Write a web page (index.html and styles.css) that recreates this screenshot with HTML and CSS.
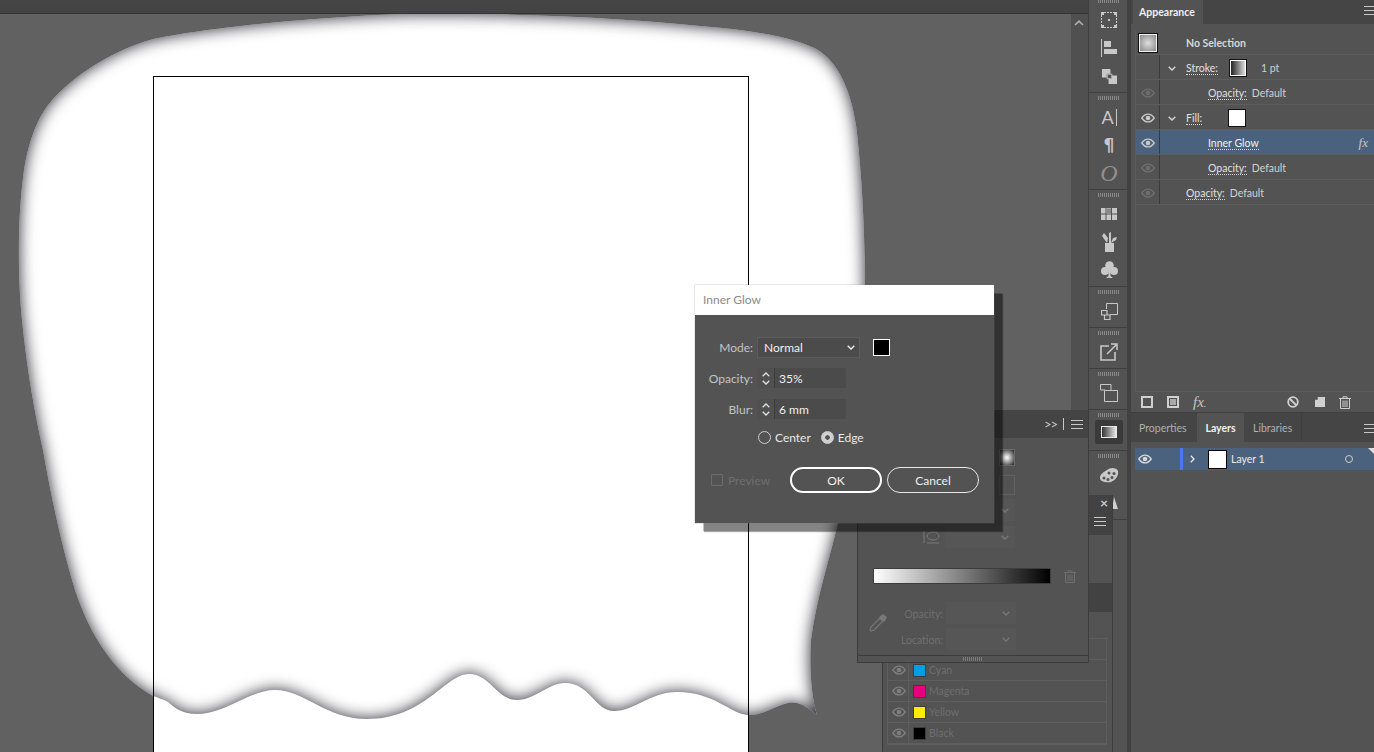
FILE: index.html
```html
<!DOCTYPE html>
<html lang="en">
<head>
<meta charset="utf-8">
<title>Inner Glow</title>
<link rel="stylesheet" href="styles.css">
</head>
<body>
<svg class="defs" width="0" height="0">
  <symbol id="eye" viewBox="0 0 14 10"><path d="M.8 5C2.600 2.400 4.700 1.100 7 1.100S11.400 2.400 13.200 5C11.400 7.600 9.300 8.900 7 8.900S2.600 7.600 .8 5Z" fill="none" stroke="currentColor" stroke-width="1.400"/><circle cx="7" cy="5" r="2.300" fill="currentColor"/></symbol>
  <symbol id="menu" viewBox="0 0 12 9"><path d="M0 .5H12M0 4.500H12M0 8.500H12" stroke="currentColor" fill="none"/></symbol>
  <symbol id="chev" viewBox="0 0 8 5"><path d="M.7.8 4 4 7.300.8" stroke="currentColor" stroke-width="1.300" fill="none"/></symbol>
  <symbol id="trash" viewBox="0 0 12 13"><path d="M0 2.500H12M4 2.500V.8H8V2.500M1.500 2.500V12.500H10.500V2.500M4 4.500V11M6 4.500V11M8 4.500V11" stroke="currentColor" fill="none"/></symbol>
</svg>

<div class="app">
  <main class="workspace">
    <div class="topbar"></div>
    <div class="stage">
      <div class="canvas">
        <svg class="artwork" viewBox="0 14 1071 738" width="1071" height="738">
          <defs>
            <filter id="innerglow" x="-5%" y="-8%" width="110%" height="116%" color-interpolation-filters="sRGB">
              <feComponentTransfer in="SourceAlpha" result="inv"><feFuncA type="table" tableValues="1 0"/></feComponentTransfer>
              <feGaussianBlur in="inv" stdDeviation="8" result="blur"/>
              <feFlood flood-color="#2a2832" result="col"/>
              <feComposite in="col" in2="blur" operator="in" result="shade"/>
              <feComposite in="shade" in2="SourceAlpha" operator="in" result="inner"/>
              <feMerge><feMergeNode in="SourceGraphic"/><feMergeNode in="inner"/></feMerge>
            </filter>
          </defs>
          <rect x="153" y="76" width="596" height="700" fill="#fff"/>
          <path filter="url(#innerglow)" fill="#fff" d="M400 14C500 13 600 16 700 26C740 29 785 35 812 47C835 57 850 85 856 125C861 165 865 225 865 290C865 380 852 470 838 523C830 557 816 600 811 640C809 670 812 700 817 715C805 705 797 701 788 703C775 706 762 716 748 715C730 714 715 692 677 692C650 692 635 711 614 711C595 711 590 683 565 683C548 683 535 700 517 700C497 700 490 674 469 674C445 674 425 719 367 719C325 719 305 690 275 690C250 690 225 714 197 714C182 714 175 708 168 702C163 699 158 698 153 696C125 680 95 650 75 590C60 540 50 490 43 450C35 415 27 370 22 320C18 280 17 220 24 170C30 135 40 110 60 92C80 72 115 50 150 40C190 30 300 18 400 14Z"/>
          <rect x="153.500" y="76.500" width="595" height="700" fill="none" stroke="#000"/>
        </svg>
      </div>
      <div class="scrollbar"><svg class="scroll-up" width="10" height="6"><use href="#chev" transform="rotate(180 5 3)" width="10" height="6"/></svg></div>
    </div>
  </main>

  <aside class="dock">
    <section class="dock-group triple first">
      <i class="grip"></i>
      <div class="dock-icon"><svg width="16" height="16" viewBox="0 0 16 16"><path d="M3 .5H13M3 15.500H13M.5 3V13M15.500 3V13" stroke="#c8c8c8" stroke-dasharray="2 1" fill="none"/><path d="M0 0H3V3H0ZM13 0H16V3H13ZM0 13H3V16H0ZM13 13H16V16H13ZM7 7H9V9H7Z" fill="#c8c8c8"/></svg></div>
      <div class="dock-icon"><svg width="16" height="18" viewBox="0 0 16 18"><path d="M.5 0V18" stroke="#c8c8c8"/><path d="M3 2H10V8H3ZM3 10H16V15H3Z" fill="#c8c8c8"/></svg></div>
      <div class="dock-icon"><svg width="15" height="15" viewBox="0 0 16 16"><path d="M0 0H9V5H5V9H0ZM7 7H16V16H7Z" fill="#c8c8c8"/><path d="M5.500 5.500H10.500V10.500H5.500Z" fill="#535353" stroke="#c8c8c8"/></svg></div>
    </section>
    <section class="dock-group triple">
      <i class="grip"></i>
      <div class="dock-icon glyph-a"><span>A</span><b></b></div>
      <div class="dock-icon glyph-p">¶</div>
      <div class="dock-icon glyph-o">O</div>
    </section>
    <section class="dock-group triple">
      <i class="grip"></i>
      <div class="dock-icon"><svg width="16" height="12" viewBox="0 0 16 12"><path d="M0 0H16V12H0Z" fill="#c8c8c8"/><path d="M5 0V12M10.500 0V12M0 6H16" stroke="#535353"/><path d="M5.500 .5H10V5.500H5.500Z" fill="#888"/></svg></div>
      <div class="dock-icon"><svg width="16" height="20" viewBox="0 0 16 20"><path d="M4 11H13V20H4Z" fill="#c8c8c8"/><path d="M6 11 1 4 3 1 7 6ZM8 11V1L10 0 10 11ZM10 11 12 6 16 5 15 8Z" fill="#c8c8c8"/></svg></div>
      <div class="dock-icon"><svg width="17" height="18" viewBox="0 0 17 18"><circle cx="8.500" cy="4.500" r="4.300" fill="#c8c8c8"/><circle cx="4" cy="10" r="4" fill="#c8c8c8"/><circle cx="13" cy="10" r="4" fill="#c8c8c8"/><path d="M7.500 8H9.500V15L12 17H5L7.500 15Z" fill="#c8c8c8"/></svg></div>
    </section>
    <section class="dock-group">
      <i class="grip"></i>
      <div class="dock-icon"><svg width="17" height="17" viewBox="0 0 17 17"><path d="M5.500 6V.5H16.500V11.500H9" fill="none" stroke="#c8c8c8"/><path d="M.5 7.500H6V12H.5ZM3.500 12H9V16.500H3.500Z" fill="none" stroke="#c8c8c8" stroke-width="1.200"/></svg></div>
    </section>
    <section class="dock-group">
      <i class="grip"></i>
      <div class="dock-icon"><svg width="18" height="18" viewBox="0 0 18 18"><path d="M9 3H1V17H15V9" fill="none" stroke="#c8c8c8" stroke-width="1.600"/><path d="M7 11 16 2M11 1H17V7" fill="none" stroke="#c8c8c8" stroke-width="1.500"/></svg></div>
    </section>
    <section class="dock-group">
      <i class="grip"></i>
      <div class="dock-icon"><svg width="18" height="18" viewBox="0 0 18 18"><path d="M5 6H.5V.5H11V6" fill="none" stroke="#c8c8c8"/><path d="M4.500 6.500H17.500V17.500H4.500Z" fill="none" stroke="#c8c8c8"/></svg></div>
    </section>
    <section class="dock-group">
      <i class="grip"></i>
      <div class="dock-icon active"><span class="grad-chip"></span></div>
    </section>
    <section class="dock-group last">
      <i class="grip"></i>
      <div class="dock-icon"><svg width="20" height="16" viewBox="0 0 20 16"><path d="M1 11C1 7 5 5 8 3C11 .5 17 0 19 4C20 8 17 13 12 15C8 16 1 15 1 11Z" fill="#c8c8c8"/><circle cx="5" cy="11" r="1.500" fill="#535353"/><circle cx="9" cy="12.500" r="1.500" fill="#535353"/><circle cx="13" cy="10.500" r="1.500" fill="#535353"/><circle cx="15" cy="6.500" r="1.500" fill="#535353"/><circle cx="10" cy="6" r="1.500" fill="#535353"/></svg></div>
      <div class="dock-icon offset"><svg width="10" height="12" viewBox="0 0 10 12"><path d="M5 0 9 12H3Z" fill="#d0d0d0"/></svg></div>
    </section>
  </aside>

  <div class="panels">
    <section class="appearance">
      <header class="tabbar">
        <span class="tab on">Appearance</span>
        <svg class="tab-menu" width="12" height="9"><use href="#menu"/></svg>
      </header>
      <div class="rows">
        <div class="row head"><span class="thumb-lg"></span><strong class="t-no">No Selection</strong></div>
        <div class="row line"><span class="eye-cell"></span><svg class="twist" width="8" height="5"><use href="#chev"/></svg><span class="lbl u">Stroke:</span><span class="chip gradient stroke-chip"></span><span class="val pt">1 pt</span></div>
        <div class="row line"><span class="eye-cell"><svg class="eye dim" width="14" height="10"><use href="#eye"/></svg></span><span class="lbl u in2">Opacity:</span><span class="val">Default</span></div>
        <div class="row line"><span class="eye-cell"><svg class="eye" width="14" height="10"><use href="#eye"/></svg></span><svg class="twist" width="8" height="5"><use href="#chev"/></svg><span class="lbl u fill-l">Fill:</span><span class="chip white"></span></div>
        <div class="row line sel"><span class="eye-cell"><svg class="eye" width="14" height="10"><use href="#eye"/></svg></span><span class="lbl u in2 ig">Inner Glow</span><em class="fx">fx</em></div>
        <div class="row line"><span class="eye-cell"><svg class="eye dim" width="14" height="10"><use href="#eye"/></svg></span><span class="lbl u in2">Opacity:</span><span class="val">Default</span></div>
        <div class="row line"><span class="eye-cell"><svg class="eye dim" width="14" height="10"><use href="#eye"/></svg></span><span class="lbl u in1">Opacity:</span><span class="val">Default</span></div>
      </div>
      <footer class="app-tools">
        <svg width="12" height="12" viewBox="0 0 12 12"><path d="M1 1H11V11H1Z" fill="none" stroke="#d0d0d0" stroke-width="2"/></svg>
        <svg width="12" height="12" viewBox="0 0 12 12"><path d="M1 1H11V11H1Z" fill="none" stroke="#d0d0d0" stroke-width="2"/><path d="M3 3H9V9H3Z" fill="#a8a8a8"/></svg>
        <em class="tool-fx">fx<small>.</small></em>
        <svg class="tool-no" width="12" height="12" viewBox="0 0 12 12"><circle cx="6" cy="6" r="4.800" fill="none" stroke="#d0d0d0" stroke-width="1.800"/><path d="M2.500 2.500 9.500 9.500" stroke="#d0d0d0" stroke-width="1.800"/></svg>
        <svg class="tool-new" width="10" height="10" viewBox="0 0 11 11"><path d="M3 0H11V11H0V3H3Z" fill="#d0d0d0"/></svg>
        <svg class="tool-trash" width="12" height="13"><use href="#trash" color="#d0d0d0"/></svg>
      </footer>
    </section>
    <section class="layers">
      <header class="tabbar tabbar-l">
        <span class="tab">Properties</span>
        <span class="tab on">Layers</span>
        <span class="tab lib">Libraries</span>
        <svg class="tab-menu" width="12" height="9"><use href="#menu"/></svg>
      </header>
      <div class="layer-row">
        <svg class="eye l-eye" width="14" height="10"><use href="#eye"/></svg>
        <i class="l-color"></i>
        <svg class="l-twist" width="5" height="8" viewBox="0 0 5 8"><path d="M.8.8 4 4 .8 7.200" fill="none" stroke="#e8e8e8" stroke-width="1.300"/></svg>
        <span class="chip white l-chip"></span>
        <span class="l-name">Layer 1</span>
        <i class="l-target"></i>
        <i class="l-corner"></i>
      </div>
    </section>
  </div>
</div>

<section class="float swatches-panel">
  <header class="sw-head"><span class="sw-x">×</span><svg class="sw-menu" width="14" height="9"><use href="#menu"/></svg></header>
  <div class="sw-space"></div>
  <div class="sw-bar"></div>
  <div class="sw-table">
    <div class="sw-row"></div>
    <div class="sw-row"><svg width="14" height="10"><use href="#eye"/></svg><i class="sw-c cyan"></i><span>Cyan</span></div>
    <div class="sw-row"><svg width="14" height="10"><use href="#eye"/></svg><i class="sw-c magenta"></i><span>Magenta</span></div>
    <div class="sw-row"><svg width="14" height="10"><use href="#eye"/></svg><i class="sw-c yellow"></i><span>Yellow</span></div>
    <div class="sw-row"><svg width="14" height="10"><use href="#eye"/></svg><i class="sw-c black"></i><span>Black</span></div>
  </div>
</section>

<section class="float gradient-panel">
  <header class="gp-head">
    <span class="gp-more">&gt;&gt;</span><i class="gp-sep"></i><svg width="12" height="9"><use href="#menu"/></svg>
  </header>
  <div class="gp-body">
    <div class="gp-row r1"><span class="gp-thumb"></span></div>
    <div class="gp-row r2"><span class="gp-box"></span></div>
    <div class="gp-row r3"><span class="gp-drop"><svg width="8" height="5"><use href="#chev"/></svg></span></div>
    <div class="gp-row r4"><svg class="gp-ico" width="18" height="14" viewBox="0 0 18 14"><ellipse cx="10" cy="6" rx="6" ry="4" fill="none" stroke="#7a7a7a"/><path d="M1 1V13M4 13H16" stroke="#7a7a7a" fill="none"/></svg><span class="gp-drop"><svg width="8" height="5"><use href="#chev"/></svg></span></div>
    <div class="gp-strip"><span class="gp-ramp"></span><svg class="gp-trash" width="12" height="13"><use href="#trash"/></svg></div>
    <div class="gp-foot">
      <svg class="gp-pick" width="18" height="18" viewBox="0 0 18 18"><path d="M11 4 14 7 5 16 2 17 1 16 2 13Z" fill="none" stroke="#777" stroke-width="1.200"/><path d="M11 2 14 0 18 3 16 7 14 8 10 4Z" fill="#777"/></svg>
      <div class="gp-fields">
        <div class="gp-field"><label>Opacity:</label><span class="gp-drop"><svg width="8" height="5"><use href="#chev"/></svg></span></div>
        <div class="gp-field"><label>Location:</label><span class="gp-drop"><svg width="8" height="5"><use href="#chev"/></svg></span></div>
      </div>
    </div>
  </div>
  <footer class="gp-grip"><i class="grip"></i></footer>
</section>

<section class="float dialog">
  <header class="dlg-title">Inner Glow</header>
  <div class="dlg-body">
    <div class="dlg-row">
      <label>Mode:</label>
      <span class="select">Normal<svg width="8" height="5"><use href="#chev"/></svg></span>
      <span class="black-chip"></span>
    </div>
    <div class="dlg-row second">
      <label>Opacity:</label>
      <span class="spin"><span class="arrows"><svg width="8" height="5"><use href="#chev" transform="rotate(180 4 2.500)"/></svg><svg width="8" height="5"><use href="#chev"/></svg></span><span class="num">35%</span></span>
    </div>
    <div class="dlg-row third">
      <label>Blur:</label>
      <span class="spin"><span class="arrows"><svg width="8" height="5"><use href="#chev" transform="rotate(180 4 2.500)"/></svg><svg width="8" height="5"><use href="#chev"/></svg></span><span class="num">6 mm</span></span>
    </div>
    <div class="radios">
      <span class="radio"><i></i>Center</span>
      <span class="radio picked"><i></i>Edge</span>
    </div>
    <div class="dlg-foot">
      <span class="preview"><i></i>Preview</span>
      <span class="btn primary">OK</span>
      <span class="btn">Cancel</span>
    </div>
  </div>
</section>
</body>
</html>
```
FILE: styles.css
```css
* { box-sizing: border-box; }
html, body { margin: 0; padding: 0; width: 1374px; height: 752px; overflow: hidden; }
body { background: #535353; color: #d8d8d8; font: 10.5px Lato, "Open Sans", sans-serif; position: relative; }
.defs { position: absolute; }
i, em { display: block; }
svg { display: block; flex: none; }

.app { display: flex; width: 1374px; height: 752px; }

/* workspace */
.workspace { width: 1089px; flex: none; display: flex; flex-direction: column; border-right: 1px solid #3f3f3f; }
.topbar { height: 14px; flex: none; background: linear-gradient(#454545, #434343 92%, #333 92%); }
.stage { flex: 1; display: flex; min-height: 0; }
.canvas { width: 1071px; flex: none; background: #616161; overflow: hidden; }
.artwork { display: block; }
.scrollbar { flex: 1; background: #505050; padding: 6px 3px 0; }
.scroll-up { color: #b0b0b0; }

/* dock */
.dock { width: 38px; flex: none; color: #c8c8c8; }
.dock-group { padding: 2px 0 3px; border-bottom: 1px solid #3f3f3f; height: 41px; }
.dock-group.triple { height: 97px; }
.dock-group.first { margin-top: -4px; }
.dock-group.last { height: 69px; }
.grip { display: block; width: 21px; height: 4px; margin: 1px auto 3px;
  background: repeating-linear-gradient(90deg, #8a8a8a 0 1px, #535353 1px 2px); }
.dock-icon { height: 28px; display: flex; align-items: center; justify-content: center; padding-left: 2px; }
.dock-icon.active { height: 24px; margin: 2px 4px 2px 6px; padding-left: 0; background: #3a3a3a; border-radius: 2px; }
.dock-icon.offset { justify-content: flex-end; padding-right: 8px; }
.grad-chip { width: 16px; height: 12px; border: 1px solid #e8e8e8; background: linear-gradient(90deg, #333, #e8e8e8); }
.glyph-a { gap: 2px; font-size: 18px; color: #c8c8c8; }
.glyph-a b { width: 1px; height: 17px; background: #c8c8c8; }
.glyph-p { font: bold 17px "DejaVu Sans", sans-serif; }
.glyph-o { font: italic 24px "Liberation Serif", serif; color: #8f8f8f; }

/* right panels */
.panels { flex: 1; min-width: 0; display: flex; flex-direction: column; border-left: 4px solid #414141; }
.tabbar { height: 24px; flex: none; background: #454545; display: flex; padding-left: 2px; position: relative; }
.tab { display: flex; align-items: center; padding: 0 6px; height: 100%; color: #bdbdbd; font-weight: 400; }
.tab.on { background: #535353; color: #f0f0f0; font-weight: 700; width: 70px; }
.tab-menu { position: absolute; right: -2px; top: 6px; color: #c8c8c8; }
.appearance { height: 413px; flex: none; display: flex; flex-direction: column; border-bottom: 1px solid #3f3f3f; }
.rows { margin: 7px 0 0 4px; flex: 1; border-left: 1px solid #5c5c5c; }
.row { height: 25px; display: flex; align-items: center; border-bottom: 1px solid #5d5d5d; position: relative; }
.row.line { padding-top: 2px; }
.row.head { height: 24px; }
.row.sel { background: #4a627e; }
.thumb-lg { width: 18px; height: 18px; margin-left: 3px; border: 1px solid #f0f0f0; outline: 1px solid #111; background: radial-gradient(#ddd, #888); }
.t-no { margin-left: 29px; font-weight: 700; color: #d8d8d8; }
.eye-cell { width: 24px; height: calc(100% + 2px); margin-top: -2px; padding-top: 1px; flex: none; display: flex; align-items: center; justify-content: center; border-right: 1px solid #3a3a3a; }
.eye { color: #c8c8c8; }
.eye.dim { color: #6e6e6e; }
.twist { margin-left: 8px; color: #d8d8d8; }
.lbl.u { border-bottom: 1px dotted #d8d8d8; line-height: 11px; margin-top: 1px; }
.lbl { color: #e0e0e0; margin-left: 10px; }
.lbl.in2 { margin-left: 48px; }
.lbl.in1 { margin-left: 26px; }
.val { margin-left: 5px; color: #d0d0d0; }
.pt { margin-left: 15px; }
.chip { width: 16px; height: 16px; flex: none; border: 1px solid #fff; outline: 1px solid #111; margin-top: -1px; }
.chip.gradient { background: linear-gradient(90deg, #222, #ddd); }
.chip.white { background: #fff; }
.stroke-chip { margin-left: 12px; }
.fill-l + .chip { margin-left: 27px; }
.ig { color: #f0f0f0; }
.fx { position: absolute; right: 6px; font: italic 13px "Liberation Serif", serif; color: #c8c8c8; }
.app-tools { height: 21px; flex: none; margin-left: 4px; border-top: 1px solid #5d5d5d; display: flex; align-items: center; padding-left: 6px; gap: 14px; color: #d0d0d0; }
.tool-fx { font: italic 15px "Liberation Serif", serif; color: #c8c8c8; }
.tool-fx small { font-size: 10px; }
.tool-no { margin-left: 67px; }
.tool-new { margin-left: 2px; }
.tool-trash { margin-left: 0; }

.layers { flex: 1; display: flex; flex-direction: column; }
.tabbar-l { height: 29px; padding-left: 0; }
.tabbar-l .tab { padding: 0 8px; color: #b0b0b0; }
.tabbar-l .tab:first-child { width: 66px; }
.tabbar-l .tab.on { width: 47px; padding: 0; justify-content: center; color: #f0f0f0; }
.tabbar-l .lib { border-right: 1px solid #3f3f3f; width: 58px; padding-left: 9px; }
.tabbar-l .tab-menu { top: 11px; }
.layer-row { margin: 6px 0 0 4px; height: 22px; background: #4a627e; display: flex; align-items: center; position: relative; }
.l-eye { margin-left: 3px; color: #d8d8d8; }
.l-color { width: 3px; height: 100%; margin-left: 28px; background: #4f74f0; }
.l-twist { margin-left: 7px; }
.l-chip { margin: 0 0 0 14px; width: 17px; height: 17px; border: 0; outline: 1px solid #000; }
.l-name { margin-left: 5px; color: #eaeaea; width: 114px; }
.l-target { width: 8px; height: 8px; border: 1px solid #ccc; border-radius: 50%; }
.l-corner { position: absolute; right: 0; top: 0; border: 3px solid; border-color: #ddd #ddd transparent transparent; }

/* floating windows */
.float { position: absolute; }

.swatches-panel { left: 882px; top: 495px; width: 231px; height: 270px; background: #535353; border-left: 1px solid #3c3c3c; border-right: 1px solid #3c3c3c; color: #6f6f6f; }
.sw-head { height: 40px; margin-left: 205px; background: #424242; color: #c8c8c8; display: flex; flex-direction: column; align-items: center; padding-top: 1px; position: relative; }
.sw-x { font: bold 14px/14px Lato, sans-serif; margin-left: 8px; }
.sw-menu { margin-top: 7px; }
.sw-space { height: 48px; }
.sw-bar { height: 29px; background: #424242; }
.sw-table { margin: 26px 5px 0 4px; border: 1px solid #5e5e5e; }
.sw-row { height: 21px; display: flex; align-items: center; border-bottom: 1px solid #5e5e5e; color: #7e7e7e; position: relative; padding-left: 4px; }
.sw-row::before { content: ""; position: absolute; left: 20px; top: 0; bottom: 0; width: 1px; background: #5e5e5e; }
.sw-row span { margin-left: 4px; color: #6e6e6e; }
.sw-c { width: 11px; height: 11px; margin-left: 8px; outline: 1px solid #3c3c3c; }
.cyan { background: #009fe3; }
.magenta { background: #e6007e; }
.yellow { background: #ffed00; }
.black { background: #000; }

.gradient-panel { left: 857px; top: 410px; width: 232px; height: 253px; background: #535353; border: 1px solid #3c3c3c; border-top: 0; color: #6f6f6f; display: flex; flex-direction: column; }
.gp-head { height: 28px; flex: none; background: #444; color: #c8c8c8; display: flex; align-items: center; justify-content: flex-end; padding-right: 5px; font-size: 12px; }
.gp-more { font-size: 13px; letter-spacing: -1px; margin-right: 6px; }
.gp-sep { width: 1px; height: 12px; background: #c8c8c8; margin-right: 7px; }
.gp-body { flex: 1; }
.gp-row { display: flex; justify-content: flex-end; align-items: center; width: 157px; }
.r1 { margin-top: 11px; }
.r2 { margin-top: 9px; }
.r3 { margin-top: 4px; }
.r4 { margin-top: 5px; gap: 4px; }
.gp-thumb { width: 16px; height: 17px; background: radial-gradient(#fff, #222); border: 1px solid #6a6a6a; }
.gp-box { width: 16px; height: 20px; border: 1px solid #626262; }
.gp-drop { width: 70px; height: 22px; background: #565656; color: #777; display: flex; align-items: center; justify-content: flex-end; padding-right: 6px; }
.gp-strip { display: flex; align-items: center; margin: 20px 0 0 15px; }
.gp-ramp { width: 178px; height: 16px; border: 1px solid #3c3c3c; background: linear-gradient(90deg, #fff, #000); }
.gp-trash { margin-left: 13px; color: #6e6e6e; }
.gp-foot { display: flex; margin-top: 18px; padding-left: 11px; }
.gp-pick { margin-top: 12px; }
.gp-fields { margin-left: 12px; }
.gp-field { display: flex; align-items: center; gap: 3px; margin-bottom: 4px; width: 117px; justify-content: flex-end; }
.gp-field label { color: #6f6f6f; padding-top: 2px; }
.gp-grip { height: 7px; flex: none; border-top: 1px solid #3c3c3c; }
.gp-grip .grip { width: 20px; height: 4px; margin: 1px auto 0; background: repeating-linear-gradient(90deg, #7a7a7a 0 1px, #535353 1px 2px); }

.dialog { left: 695px; top: 285px; width: 299px; height: 238px; background: #535353; box-shadow: 0 0 1px #777, 8px 8px 0 rgba(0,0,0,.2), 9px 9px 1px rgba(0,0,0,.35); font-size: 12px; }
.dlg-title { height: 30px; background: #fff; color: #8c8c8c; display: flex; align-items: center; padding: 0 0 2px 8px; }
.dlg-body { padding-top: 22px; }
.dlg-row { display: flex; align-items: center; height: 21px; }
.dlg-row.second { margin-top: 10px; height: 20px; }
.dlg-row.third { margin-top: 11px; height: 20px; }
.dlg-row label { width: 58px; text-align: right; margin-right: 4px; color: #c4c4c4; }
.select { width: 103px; height: 21px; background: #4b4b4b; border: 1px solid #5c5c5c; color: #f0f0f0; display: flex; align-items: center; justify-content: space-between; padding: 0 4px 0 6px; }
.black-chip { width: 17px; height: 17px; margin-left: 13px; background: #000; border: 1px solid #fff; }
.spin { width: 89px; height: 20px; background: #4b4b4b; border-radius: 2px; display: flex; align-items: center; color: #f0f0f0; }
.arrows { width: 18px; height: 100%; border-right: 1px solid #3e3e3e; display: flex; flex-direction: column; align-items: center; justify-content: center; gap: 3px; background: #505050; color: #e0e0e0; }
.num { margin-left: 4px; }
.radios { display: flex; margin: 10px 0 0 63px; height: 16px; align-items: center; }
.radio { display: flex; align-items: center; color: #e8e8e8; gap: 4px; }
.radio + .radio { margin-left: 10px; }
.radio i { width: 13px; height: 13px; border-radius: 50%; border: 1px solid #cfcfcf; }
.radio.picked i { background: radial-gradient(circle, #535353 0 2px, #d0d0d0 2.5px); }
.dlg-foot { display: flex; align-items: center; margin-top: 22px; height: 26px; padding-left: 16px; }
.preview { display: flex; align-items: center; gap: 5px; width: 79px; color: #6f6f6f; }
.preview i { width: 12px; height: 12px; border: 1px solid #6c6c6c; border-radius: 1px; }
.btn { width: 92px; height: 26px; border: 1px solid #e8e8e8; border-radius: 13px; display: flex; align-items: center; justify-content: center; color: #f0f0f0; margin-right: 5px; }
.btn.primary { border: 2px solid #fff; }
```
